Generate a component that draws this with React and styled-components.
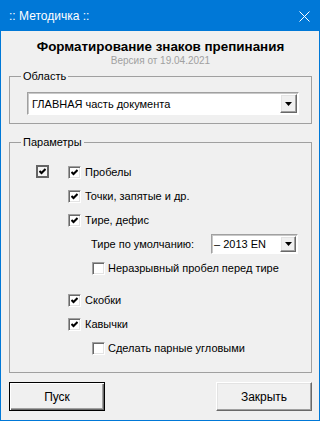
import React from "react";
import styled, { createGlobalStyle } from "styled-components";

const GlobalStyle = createGlobalStyle`
  html, body { margin: 0; padding: 0; background: #ffffff; }
  body { font-family: "Liberation Sans", Arial, sans-serif; }
  * { box-sizing: border-box; }
`;

const Window = styled.div`
  width: 320px;
  height: 421px;
  border: 1px solid #0078d7;
  background: #f0f0f0;
  display: flex;
  flex-direction: column;
  color: #000;
  font-size: 11px;
`;

const TitleBar = styled.div`
  height: 30px;
  flex: none;
  background: #0078d7;
  color: #fff;
  display: flex;
  align-items: center;
  justify-content: space-between;
  padding: 0 7px 0 8px;
  font-size: 12px;
`;

const CloseButton = styled.div`
  width: 16px;
  height: 16px;
  display: flex;
  align-items: center;
  justify-content: center;
`;

const Client = styled.div`
  flex: 1;
  display: flex;
  flex-direction: column;
  padding: 0 7px 0 8px;
`;

const Heading = styled.div`
  margin-top: 8px;
  text-align: center;
  font-weight: bold;
  font-size: 13.4px;
  line-height: 16px;
`;

const Version = styled.div`
  text-align: center;
  font-size: 10px;
  line-height: 12px;
  color: #a0a0a0;
`;

const Group = styled.fieldset`
  margin: ${(p) => p.$top}px 0 0 0;
  padding: 0;
  min-width: 0;
  border: 1px solid #a0a0a0;
`;

const Legend = styled.legend`
  margin-left: 11px;
  padding: 0 2px;
  font-size: 11px;
  line-height: 14px;
`;

const GroupBody = styled.div`
  padding: ${(p) => p.$pad};
`;

const Combo = styled.div`
  width: ${(p) => p.$w};
  height: ${(p) => p.$h}px;
  background: #fff;
  border: 1px solid;
  border-color: #a0a0a0 #ffffff #ffffff #a0a0a0;
  box-shadow: inset 1px 1px 0 #c8c8c8;
  display: flex;
  align-items: stretch;
  padding: 1px;
`;

const ComboText = styled.div`
  flex: 1;
  display: flex;
  align-items: center;
  padding-left: ${(p) => p.$pl}px;
  font-size: 11px;
  white-space: nowrap;
`;

const DropButton = styled.div`
  width: ${(p) => p.$w}px;
  background: #f0f0f0;
  border: 1px solid;
  border-color: #ffffff #696969 #696969 #ffffff;
  box-shadow: inset -1px -1px 0 #a0a0a0, inset 1px 1px 0 #e3e3e3;
  display: flex;
  align-items: center;
  justify-content: center;
`;

const ParamsLayout = styled.div`
  display: flex;
  padding: 11px 0 12px 26px;
`;

const MasterColumn = styled.div`
  width: 32px;
  flex: none;
  padding-top: 5px;
`;

const List = styled.div`
  display: flex;
  flex-direction: column;
`;

const Row = styled.div`
  height: 24px;
  display: flex;
  align-items: center;
  gap: ${(p) => (p.$indent ? 3 : 4)}px;
  padding-left: ${(p) => (p.$indent ? 24 : 0)}px;
  margin-top: ${(p) => (p.$gap ? 8 : 0)}px;
  white-space: nowrap;
`;

const SettingRow = styled.div`
  height: 24px;
  display: flex;
  align-items: center;
  padding-left: 23px;
`;

const SettingLabel = styled.div`
  width: 120px;
  flex: none;
`;

const Box = styled.div`
  width: 13px;
  height: 13px;
  flex: none;
  display: flex;
  align-items: center;
  justify-content: center;
  background: ${(p) => (p.$master ? "#f4f4f4" : "#ffffff")};
  border: ${(p) => (p.$master ? "2px solid #646464" : "1px solid")};
  border-color: ${(p) => (p.$master ? "#646464" : "#a0a0a0 #ffffff #ffffff #a0a0a0")};
  box-shadow: ${(p) =>
    p.$master ? "none" : "inset 1px 1px 0 #696969, inset -1px -1px 0 #e3e3e3"};
`;

const ButtonRow = styled.div`
  margin-top: 9px;
  display: flex;
  justify-content: space-between;
`;

const Button = styled.div`
  width: 96px;
  height: 29px;
  display: flex;
  align-items: center;
  justify-content: center;
  font-size: 12px;
  background: #f0f0f0;
  border: 1px solid;
  border-color: ${(p) => (p.$default ? "#000000" : "#ffffff #696969 #696969 #ffffff")};
  box-shadow: ${(p) =>
    p.$default
      ? "inset 1px 1px 0 #ffffff, inset -1px -1px 0 #696969, inset -2px -2px 0 #a0a0a0"
      : "inset -1px -1px 0 #a0a0a0, inset 1px 1px 0 #e3e3e3"};
`;

const Check = () => (
  <svg width="7" height="7" viewBox="0 0 7 7">
    <path d="M0.5 3 L2.5 5 L6.5 1" fill="none" stroke="#000" strokeWidth="2" />
  </svg>
);

const Arrow = () => (
  <svg width="7" height="4" viewBox="0 0 7 4">
    <path d="M0 0 H7 L3.5 4 Z" fill="#000" />
  </svg>
);

const CheckBox = ({ checked, master }) => (
  <Box $master={master}>{checked ? <Check /> : null}</Box>
);

export default function App() {
  return (
    <>
      <GlobalStyle />
      <Window>
        <TitleBar>
          <span>:: Методичка ::</span>
          <CloseButton>
            <svg width="11" height="11" viewBox="0 0 11 11">
              <path d="M0.5 0.5 L10.5 10.5 M10.5 0.5 L0.5 10.5" stroke="#fff" strokeWidth="1" />
            </svg>
          </CloseButton>
        </TitleBar>
        <Client>
          <Heading>Форматирование знаков препинания</Heading>
          <Version>Версия от 19.04.2021</Version>

          <Group $top={2}>
            <Legend>Область</Legend>
            <GroupBody $pad="9px 12px 8px 17px">
              <Combo $w="100%" $h={23}>
                <ComboText $pl={3}>ГЛАВНАЯ часть документа</ComboText>
                <DropButton $w={17}>
                  <Arrow />
                </DropButton>
              </Combo>
            </GroupBody>
          </Group>

          <Group $top={11}>
            <Legend>Параметры</Legend>
            <ParamsLayout>
              <MasterColumn>
                <CheckBox checked master />
              </MasterColumn>
              <List>
                <Row>
                  <CheckBox checked />
                  <span>Пробелы</span>
                </Row>
                <Row>
                  <CheckBox checked />
                  <span>Точки, запятые и др.</span>
                </Row>
                <Row>
                  <CheckBox checked />
                  <span>Тире, дефис</span>
                </Row>
                <SettingRow>
                  <SettingLabel>Тире по умолчанию:</SettingLabel>
                  <Combo $w="87px" $h={20}>
                    <ComboText $pl={1}>– 2013 EN</ComboText>
                    <DropButton $w={16}>
                      <Arrow />
                    </DropButton>
                  </Combo>
                </SettingRow>
                <Row $indent>
                  <CheckBox />
                  <span>Неразрывный пробел перед тире</span>
                </Row>
                <Row $gap>
                  <CheckBox checked />
                  <span>Скобки</span>
                </Row>
                <Row>
                  <CheckBox checked />
                  <span>Кавычки</span>
                </Row>
                <Row $indent>
                  <CheckBox />
                  <span>Сделать парные угловыми</span>
                </Row>
              </List>
            </ParamsLayout>
          </Group>

          <ButtonRow>
            <Button $default>Пуск</Button>
            <Button>Закрыть</Button>
          </ButtonRow>
        </Client>
      </Window>
    </>
  );
}
